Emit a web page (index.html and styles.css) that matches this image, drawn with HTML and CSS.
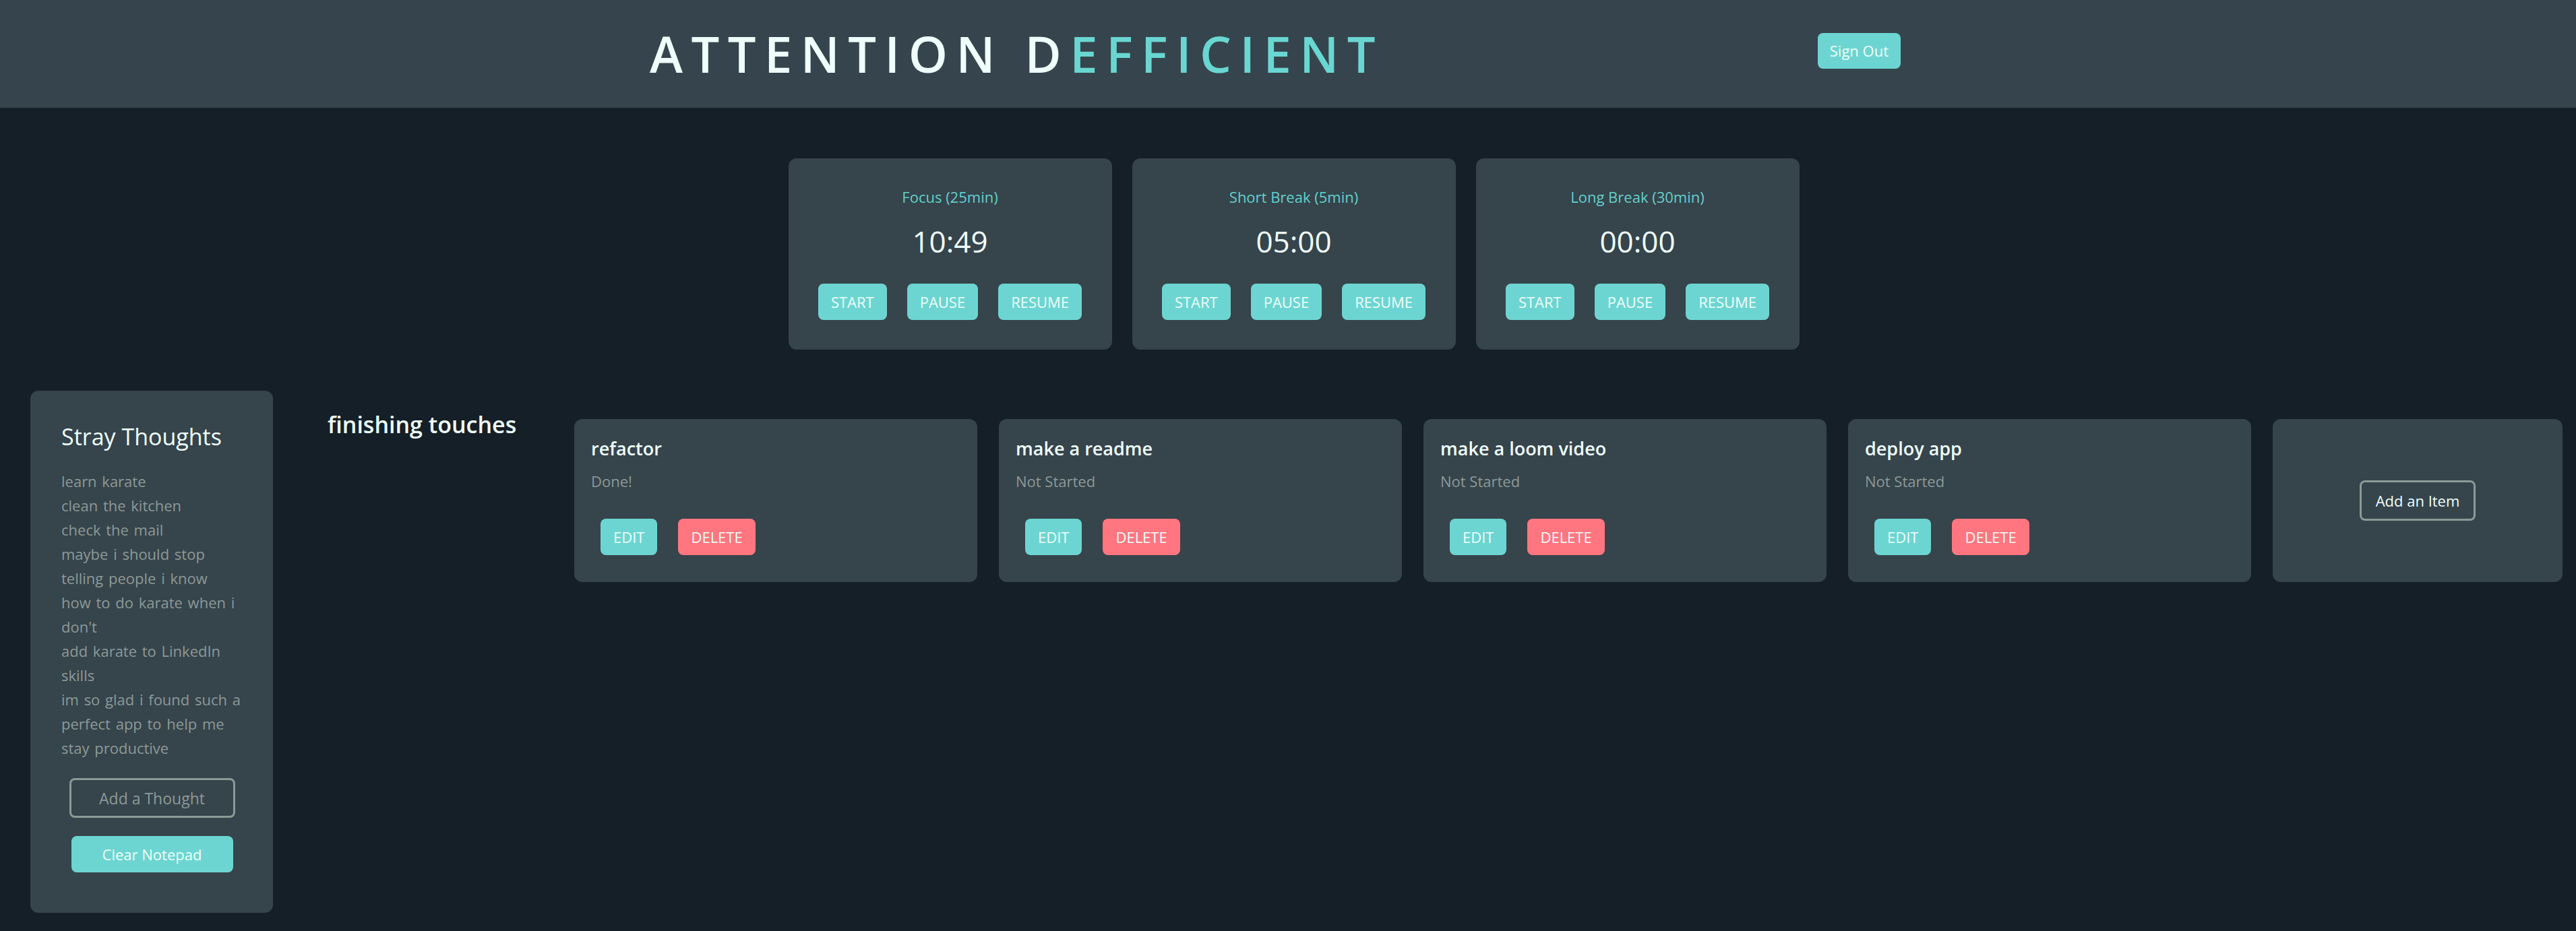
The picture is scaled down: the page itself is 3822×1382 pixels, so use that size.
FILE: index.html
```html
<!DOCTYPE html>
<html lang="en">
<head>
<meta charset="utf-8">
<title>Attention Defficient</title>
<link rel="stylesheet" href="styles.css">
</head>
<body>
<header class="topbar">
  <h1 class="brand">ATTENTION D<span class="brand-accent">EFFICIENT</span></h1>
  <button class="btn btn-teal signout">Sign Out</button>
</header>

<section class="timers">
  <div class="timer-card">
    <div class="timer-label">Focus (25min)</div>
    <div class="timer-time">10:49</div>
    <div class="timer-actions">
      <button class="btn btn-teal">START</button>
      <button class="btn btn-teal">PAUSE</button>
      <button class="btn btn-teal">RESUME</button>
    </div>
  </div>
  <div class="timer-card">
    <div class="timer-label">Short Break (5min)</div>
    <div class="timer-time">05:00</div>
    <div class="timer-actions">
      <button class="btn btn-teal">START</button>
      <button class="btn btn-teal">PAUSE</button>
      <button class="btn btn-teal">RESUME</button>
    </div>
  </div>
  <div class="timer-card">
    <div class="timer-label">Long Break (30min)</div>
    <div class="timer-time">00:00</div>
    <div class="timer-actions">
      <button class="btn btn-teal">START</button>
      <button class="btn btn-teal">PAUSE</button>
      <button class="btn btn-teal">RESUME</button>
    </div>
  </div>
</section>

<section class="lower">
  <aside class="notepad">
    <h2 class="notepad-title">Stray Thoughts</h2>
    <div class="thoughts">
      <p class="thought">learn karate</p>
      <p class="thought">clean the kitchen</p>
      <p class="thought">check the mail</p>
      <p class="thought">maybe i should stop<br>telling people i know<br>how to do karate when i<br>don't</p>
      <p class="thought">add karate to LinkedIn<br>skills</p>
      <p class="thought">im so glad i found such a<br>perfect app to help me<br>stay productive</p>
    </div>
    <button class="btn btn-outline add-thought">Add a Thought</button>
    <button class="btn btn-teal clear-notepad">Clear Notepad</button>
  </aside>

  <div class="board">
    <h2 class="board-title">finishing touches</h2>
    <div class="items">
      <div class="item-card">
        <div class="item-title">refactor</div>
        <div class="item-status">Done!</div>
        <div class="item-actions">
          <button class="btn btn-teal">EDIT</button>
          <button class="btn btn-red">DELETE</button>
        </div>
      </div>
      <div class="item-card">
        <div class="item-title">make a readme</div>
        <div class="item-status">Not Started</div>
        <div class="item-actions">
          <button class="btn btn-teal">EDIT</button>
          <button class="btn btn-red">DELETE</button>
        </div>
      </div>
      <div class="item-card">
        <div class="item-title">make a loom video</div>
        <div class="item-status">Not Started</div>
        <div class="item-actions">
          <button class="btn btn-teal">EDIT</button>
          <button class="btn btn-red">DELETE</button>
        </div>
      </div>
      <div class="item-card">
        <div class="item-title">deploy app</div>
        <div class="item-status">Not Started</div>
        <div class="item-actions">
          <button class="btn btn-teal">EDIT</button>
          <button class="btn btn-red">DELETE</button>
        </div>
      </div>
      <div class="add-card">
        <button class="btn btn-outline add-item">Add an Item</button>
      </div>
    </div>
  </div>
</section>
</body>
</html>
```

FILE: styles.css
```css
* { box-sizing: border-box; }

html, body {
  margin: 0;
  padding: 0;
  background: #151f28;
  font-family: "Open Sans", "Noto Sans", "Liberation Sans", sans-serif;
  color: #effffa;
}

body {
  width: 3822px;
  min-height: 1382px;
}

/* ---------- header ---------- */
.topbar {
  height: 160px;
  background: #36454d;
  display: flex;
  align-items: center;
  justify-content: space-between;
  padding: 0 1002px 0 964px;
}

.brand {
  margin: 0;
  font-size: 74px;
  font-weight: 600;
  letter-spacing: 12.5px;
  line-height: 1;
  color: #effffa;
}

.brand-accent { color: #6ad6d1; }

/* ---------- buttons ---------- */
.btn {
  font-family: inherit;
  border: none;
  border-radius: 8px;
  cursor: pointer;
  font-size: 22px;
  color: #effffa;
  padding: 0 19px;
  height: 54px;
}

.btn-teal { background: #6dd5d1; }
.btn-red { background: #ff7680; }
.btn-outline {
  background: transparent;
  border: 3px solid #8c9a96;
}

.signout {
  height: 53px;
  padding: 0 18px;
  margin-bottom: 10px;
}

/* ---------- timers ---------- */
.timers {
  display: flex;
  justify-content: center;
  gap: 30px;
  margin-top: 75px;
  padding-left: 17px;
}

.timer-card {
  width: 480px;
  height: 284px;
  background: #36444c;
  border-radius: 12px;
  padding: 43px 0 44px;
  display: flex;
  flex-direction: column;
  align-items: center;
}

.timer-label {
  font-size: 22px;
  line-height: 28px;
  color: #64d0cb;
}

.timer-time {
  margin-top: 24px;
  font-size: 44px;
  line-height: 56px;
  color: #effffa;
}

.timer-actions {
  margin-top: 35px;
  display: flex;
  gap: 30px;
}

/* ---------- lower area ---------- */
.lower {
  display: flex;
  align-items: flex-start;
  margin-top: 61px;
  padding: 0 20px 0 45px;
}

.notepad {
  width: 360px;
  flex: none;
  background: #36444c;
  border-radius: 12px;
  padding: 46px 45px 60px 46px;
  display: flex;
  flex-direction: column;
}

.notepad-title {
  margin: 0;
  font-size: 34px;
  font-weight: 400;
  line-height: 44px;
  color: #effffa;
}

.thoughts {
  margin-top: 26px;
}

.thought {
  margin: 0;
  font-size: 22px;
  line-height: 36px;
  word-spacing: 2px;
  color: #8c9a96;
  white-space: nowrap;
}

.add-thought {
  margin-top: 27px;
  align-self: center;
  width: 246px;
  height: 59px;
  font-size: 23px;
  color: #8c9a96;
  border-width: 3px;
}

.clear-notepad {
  margin-top: 27px;
  align-self: center;
  width: 240px;
  height: 54px;
}

/* ---------- board ---------- */
.board {
  flex: 1;
  display: flex;
  align-items: flex-start;
  margin-left: 81px;
}

.board-title {
  margin: 28px 0 0;
  width: 366px;
  flex: none;
  font-size: 34px;
  font-weight: 600;
  line-height: 44px;
  color: #effffa;
}

.items {
  flex: 1;
  display: flex;
  gap: 32px;
  margin-top: 42px;
}

.item-card {
  width: 598px;
  flex: none;
  background: #36444c;
  border-radius: 12px;
  padding: 26px 25px 40px;
}

.item-title {
  font-size: 27px;
  font-weight: 600;
  line-height: 36px;
  color: #effffa;
}

.item-status {
  margin-top: 15px;
  font-size: 22px;
  line-height: 30px;
  color: #8c9a96;
}

.item-actions {
  margin-top: 41px;
  padding-left: 14px;
  display: flex;
  gap: 31px;
}

.add-card {
  flex: 1;
  background: #36444c;
  border-radius: 12px;
  display: flex;
  align-items: center;
  justify-content: center;
}

.add-item {
  width: 172px;
  height: 60px;
  padding: 0;
  color: #effffa;
}
```
